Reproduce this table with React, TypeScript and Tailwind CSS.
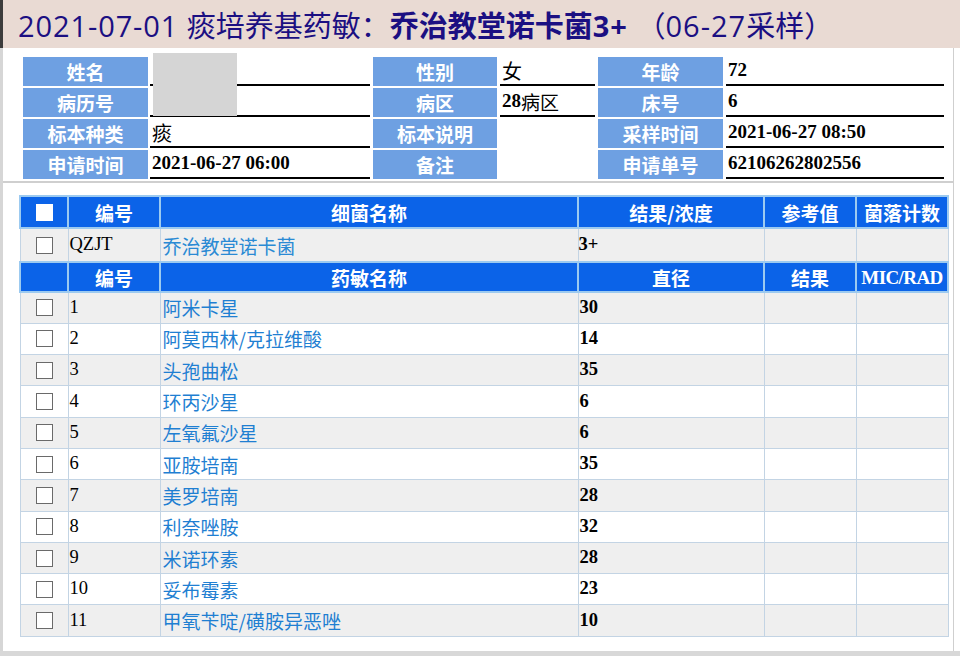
import React from "react";

const drugs: [string, string, string][] = [
  ["1", "阿米卡星", "30"],
  ["2", "阿莫西林/克拉维酸", "14"],
  ["3", "头孢曲松", "35"],
  ["4", "环丙沙星", "6"],
  ["5", "左氧氟沙星", "6"],
  ["6", "亚胺培南", "35"],
  ["7", "美罗培南", "28"],
  ["8", "利奈唑胺", "32"],
  ["9", "米诺环素", "28"],
  ["10", "妥布霉素", "23"],
  ["11", "甲氧苄啶/磺胺异恶唑", "10"],
];

const cjk = "font-['Noto_Sans_CJK_SC',sans-serif]";
const serif = "font-['Liberation_Serif','Noto_Sans_CJK_SC',serif]";

function Label({ children, w }: { children: React.ReactNode; w: string }) {
  return (
    <div
      className={`${w} h-full bg-[#6ea0e2] text-white font-bold text-[19px] leading-none flex items-center justify-center ${cjk}`}
    >
      {children}
    </div>
  );
}

function Value({
  children,
  w,
  line = true,
}: {
  children?: React.ReactNode;
  w: string;
  line?: boolean;
}) {
  return (
    <div
      className={`${w} h-full flex items-center pl-[2px] text-black ${
        line ? "border-b-2 border-black" : ""
      }`}
    >
      {children}
    </div>
  );
}

function Box() {
  return <div className="w-[17px] h-[17px] mx-auto bg-white border-[1.5px] border-[#6a6a6a]" />;
}

const th =
  "bg-[#0b63e8] text-white font-bold text-[19px] text-center border-2 border-[#9ccaf0] p-0 leading-none";
const td = "border border-[#c3d4e4] p-0";

export default function App() {
  return (
    <div className="w-[960px] h-[656px] bg-white relative overflow-hidden flex flex-col">
      {/* Title bar */}
      <div className="h-[48px] shrink-0 bg-[#e9dad3] border-l-[3px] border-[#3c3c3c] flex items-center pl-[15px] pt-[2px]">
        <div className="text-[29px] leading-none text-[#1b0f82] whitespace-nowrap font-['Open_Sans','Noto_Sans_CJK_SC',sans-serif]">
          <span className="tracking-[0.9px]">2021-07-01 </span>
          <span className={cjk}>痰培养基药敏：</span>
          <span className="font-bold">
            <span className={cjk}>乔治教堂诺卡菌</span>
            <span className="tracking-[1px]">3+ </span>
          </span>
          <span className={cjk}>（</span>
          <span className="tracking-[1px]">06-27</span>
          <span className={cjk}>采样）</span>
        </div>
      </div>

      <div className="flex-1 flex flex-col border-l-[3px] border-[#d6d6d6] w-[954px] border-r border-r-[#cfcfcf]">
        {/* Info section */}
        <div className="relative pl-[20px] pt-[9px] pb-[2px] flex flex-col gap-[2px] border-b-2 border-[#cfcfcf]">
          <div className="flex h-[29px]">
            <Label w="w-[125px]">姓名</Label>
            <div className="w-[2px]" />
            <Value w="w-[220px]" />
            <div className="w-[3px]" />
            <Label w="w-[124px]">性别</Label>
            <div className="w-[3px]" />
            <Value w="w-[95px]">
              <span className={`${cjk} text-[20px] leading-none`}>女</span>
            </Value>
            <div className="w-[3px]" />
            <Label w="w-[125px]">年龄</Label>
            <div className="w-[3px]" />
            <Value w="w-[218px]">
              <span className={`${serif} font-bold text-[19px]`}>72</span>
            </Value>
          </div>
          <div className="flex h-[29px]">
            <Label w="w-[125px]">病历号</Label>
            <div className="w-[2px]" />
            <Value w="w-[220px]" />
            <div className="w-[3px]" />
            <Label w="w-[124px]">病区</Label>
            <div className="w-[3px]" />
            <Value w="w-[95px]">
              <span className={`${serif} font-bold text-[19px]`}>28</span>
              <span className={`${cjk} text-[19px] leading-none`}>病区</span>
            </Value>
            <div className="w-[3px]" />
            <Label w="w-[125px]">床号</Label>
            <div className="w-[3px]" />
            <Value w="w-[218px]">
              <span className={`${serif} font-bold text-[19px]`}>6</span>
            </Value>
          </div>
          <div className="flex h-[29px]">
            <Label w="w-[125px]">标本种类</Label>
            <div className="w-[2px]" />
            <Value w="w-[220px]">
              <span className={`${cjk} text-[20px] leading-none`}>痰</span>
            </Value>
            <div className="w-[3px]" />
            <Label w="w-[124px]">标本说明</Label>
            <div className="w-[3px]" />
            <Value w="w-[95px]" line={false} />
            <div className="w-[3px]" />
            <Label w="w-[125px]">采样时间</Label>
            <div className="w-[3px]" />
            <Value w="w-[218px]">
              <span className={`${serif} font-bold text-[19px]`}>2021-06-27 08:50</span>
            </Value>
          </div>
          <div className="flex h-[29px]">
            <Label w="w-[125px]">申请时间</Label>
            <div className="w-[2px]" />
            <Value w="w-[220px]">
              <span className={`${serif} font-bold text-[19px]`}>2021-06-27 06:00</span>
            </Value>
            <div className="w-[3px]" />
            <Label w="w-[124px]">备注</Label>
            <div className="w-[3px]" />
            <Value w="w-[95px]" line={false} />
            <div className="w-[3px]" />
            <Label w="w-[125px]">申请单号</Label>
            <div className="w-[3px]" />
            <Value w="w-[218px]">
              <span className={`${serif} font-bold text-[19px]`}>62106262802556</span>
            </Value>
          </div>
          {/* redaction overlay */}
          <div className="absolute left-[150px] top-[5px] w-[84px] h-[63px] bg-[#d5d5d5]" />
        </div>

        {/* Table */}
        <div className="pt-[12px] pl-[16px]">
          <table className="border-collapse table-fixed w-[928px]">
            <colgroup>
              <col className="w-[48px]" />
              <col className="w-[92px]" />
              <col className="w-[418px]" />
              <col className="w-[186px]" />
              <col className="w-[92px]" />
              <col className="w-[92px]" />
            </colgroup>
            <tbody>
              <tr className="h-[32px]">
                <td className={th}>
                  <div className="w-[17px] h-[17px] mx-auto bg-white" />
                </td>
                <td className={`${th} ${cjk}`}>编号</td>
                <td className={`${th} ${cjk}`}>细菌名称</td>
                <td className={`${th} ${cjk}`}>结果/浓度</td>
                <td className={`${th} ${cjk}`}>参考值</td>
                <td className={`${th} ${cjk}`}>菌落计数</td>
              </tr>
              <tr className="h-[34px] bg-[#efefef]">
                <td className={td}>
                  <Box />
                </td>
                <td className={`${td} ${serif} text-[18.5px] text-black pl-[1px]`}>QZJT</td>
                <td className={`${td} ${cjk} text-[19px] text-[#2a8ad4] pl-[2px] leading-none`}>乔治教堂诺卡菌</td>
                <td className={`${td} ${serif} font-bold text-[18.5px] text-black`}>3+</td>
                <td className={td}></td>
                <td className={td}></td>
              </tr>
              <tr className="h-[30px]">
                <td className={th}></td>
                <td className={`${th} ${cjk}`}>编号</td>
                <td className={`${th} ${cjk}`}>药敏名称</td>
                <td className={`${th} ${cjk}`}>直径</td>
                <td className={`${th} ${cjk}`}>结果</td>
                <td className={`${th} ${serif} text-[18px] tracking-[-0.6px]`}>MIC/RAD</td>
              </tr>
              {drugs.map(([no, name, d], i) => (
                <tr
                  key={no}
                  className={`h-[31.3px] ${i % 2 === 0 ? "bg-[#efefef]" : "bg-white"}`}
                >
                  <td className={td}>
                    <Box />
                  </td>
                  <td className={`${td} ${serif} text-[18.5px] text-black pl-[1px]`}>{no}</td>
                  <td className={`${td} ${cjk} text-[19px] text-[#1f7fd2] pl-[2px] leading-none`}>
                    {name}
                  </td>
                  <td className={`${td} ${serif} font-bold text-[18.5px] text-black pl-[1px]`}>{d}</td>
                  <td className={td}></td>
                  <td className={td}></td>
                </tr>
              ))}
            </tbody>
          </table>
        </div>
        <div className="flex-1" />
      </div>
      <div className="h-[5px] shrink-0 bg-[#d8d8d8]" />
    </div>
  );
}
